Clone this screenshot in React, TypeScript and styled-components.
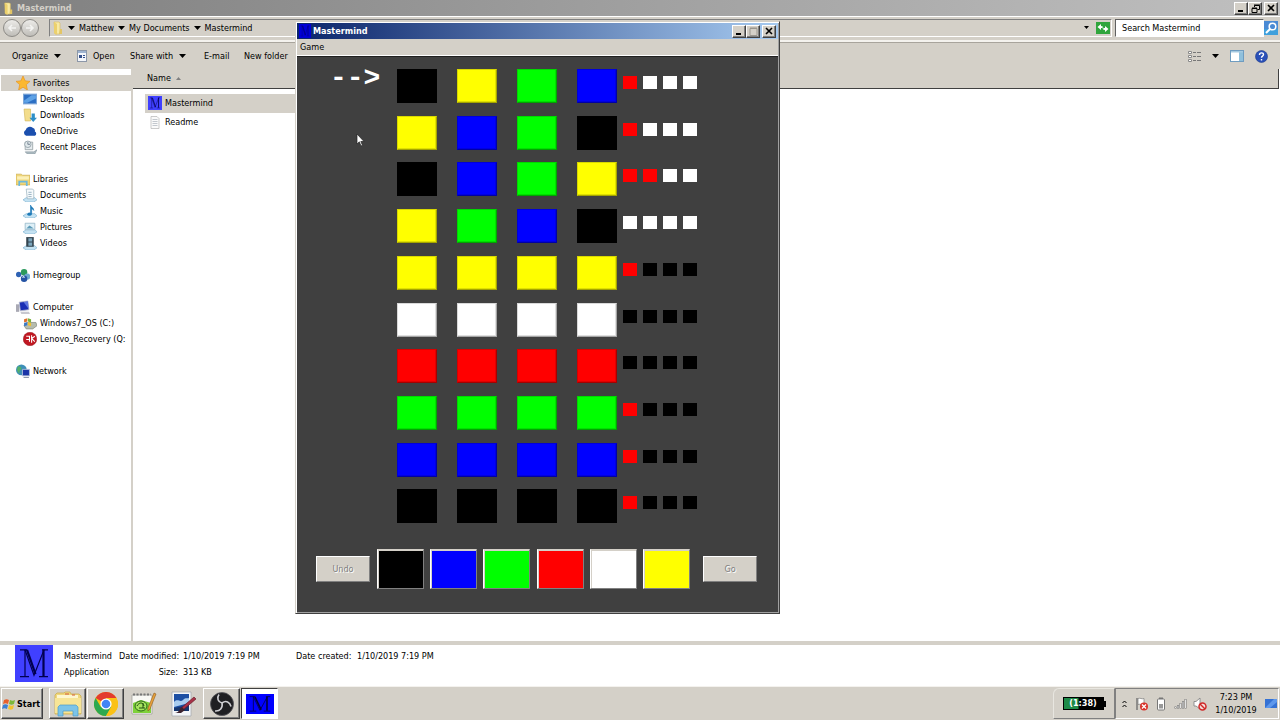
import React from "react";
import styled, { createGlobalStyle, css } from "styled-components";

const UI = `"DejaVu Sans Condensed", "DejaVu Sans", sans-serif`;
const FACE = "#d4d0c8";

const Global = createGlobalStyle`
  *, *::before, *::after { box-sizing: border-box; }
  html, body { margin: 0; padding: 0; background: #fff; }
  body, button, input { font-family: ${UI}; font-size: 9px; line-height: 16px; color: #000; }
  button { padding: 0; margin: 0; border: 0; background: none; }
  svg { display: block; flex: none; }
  ul { list-style: none; margin: 0; padding: 0; }
`;

const raised = css`
  border: 1px solid;
  border-color: #fff #404040 #404040 #fff;
  box-shadow: inset -1px -1px 0 #808080;
`;

const Desktop = styled.div`
  position: relative;
  display: flex;
  flex-direction: column;
  min-height: 100vh;
  overflow: hidden;
`;
const Explorer = styled.section`
  flex: 1;
  display: flex;
  flex-direction: column;
`;

const TitleBar = styled.header<{ $active?: boolean }>`
  display: flex;
  align-items: center;
  gap: 2px;
  height: 16px;
  padding: 0 2px;
  color: ${(p) => (p.$active ? "#fff" : FACE)};
  background: ${(p) =>
    p.$active
      ? "linear-gradient(90deg, #0a246a, #a6caf0)"
      : "linear-gradient(90deg, #808080, #c0c0c0)"};
`;
const TitleText = styled.h1`
  flex: 1;
  margin: 0;
  font-size: 9px;
  line-height: 14px;
  font-weight: bold;
`;
const CaptionButtons = styled.div`
  display: flex;
`;
const CaptionButton = styled.button`
  ${raised}
  display: grid;
  place-items: center;
  width: 14px;
  height: 13px;
  background: ${FACE};
  &:last-child { margin-left: 2px; }
`;

const AddressRow = styled.div`
  display: flex;
  align-items: center;
  gap: 3px;
  height: 26px;
  padding: 0 1px 2px 3px;
  background: ${FACE};
  border-top: 1px solid #fff;
  border-bottom: 2px solid #f4f2ee;
`;
const NavButtons = styled.div`
  display: flex;
  width: 43px;
`;
const RoundButton = styled.button`
  display: grid;
  place-items: center;
  width: 18px;
  height: 18px;
  border: 1px solid #8c8a86;
  border-radius: 50%;
  background: linear-gradient(#ecebe8, #bfbdb8);
`;
const AddressBox = styled.nav`
  flex: 1;
  display: flex;
  align-items: center;
  gap: 3px;
  height: 18px;
  padding: 0 1px;
  border: 1px solid;
  border-color: #808080 #fff #fff #808080;
`;
const Crumb = styled.a`
  color: #000;
  text-decoration: none;
  padding: 0 1px;
`;
const Spacer = styled.span`
  flex: 1;
`;
const IconButton = styled.button`
  display: grid;
  place-items: center;
`;
const HistoryButton = styled(IconButton)`
  margin-right: 4px;
`;
const SearchBox = styled.form`
  display: flex;
  width: 164px;
`;
const SearchInput = styled.input`
  flex: 1;
  min-width: 0;
  height: 18px;
  padding: 0 6px;
  border: 1px solid;
  border-color: #606060 #fff #fff #606060;
  border-radius: 0;
  background: #fff;
  &::placeholder { color: #000; opacity: 1; }
`;

const Toolbar = styled.div`
  display: flex;
  align-items: center;
  height: 27px;
  padding: 0 12px;
  background: ${FACE};
  border-top: 1px solid #a8a49c;
`;
const ToolButton = styled.button<{ $w?: number }>`
  display: flex;
  align-items: center;
  gap: 6px;
  width: ${(p) => (p.$w ? p.$w + "px" : "auto")};
  white-space: nowrap;
`;
const ToolGroup = styled.div`
  display: flex;
  align-items: center;
  gap: 11px;
`;

const Body = styled.div`
  flex: 1;
  display: flex;
`;
const Sidebar = styled.nav`
  width: 133px;
  flex: none;
  padding: 6px 0 0 1px;
  border-right: 2px solid ${FACE};
  overflow: hidden;
`;
const NavGroup = styled.ul`
  margin-bottom: 16px;
`;
const NavItem = styled.li<{ $child?: boolean; $selected?: boolean }>`
  height: 16px;
  padding-left: ${(p) => (p.$child ? 22 : 15)}px;
  background: ${(p) => (p.$selected ? FACE : "transparent")};
`;
const NavLink = styled.a`
  display: flex;
  align-items: center;
  gap: 3px;
  color: #000;
  text-decoration: none;
  white-space: nowrap;
`;

const FilePane = styled.main`
  flex: 1;
  padding-right: 1px;
`;
const FileTable = styled.table`
  width: 100%;
  border-collapse: collapse;
`;
const HeadCell = styled.th`
  height: 19px;
  padding: 0 0 0 14px;
  text-align: left;
  font-weight: normal;
  background: ${FACE};
  border-bottom: 1px solid #404040;
  border-right: 1px solid #404040;
`;
const HeadLabel = styled.span`
  display: flex;
  align-items: center;
  gap: 5px;
`;
const FileCell = styled.td`
  padding: 0 0 0 12px;
`;
const FirstRow = styled.tr`
  & > td { padding-top: 5px; }
`;
const FileName = styled.span<{ $selected?: boolean }>`
  display: flex;
  align-items: center;
  gap: 3px;
  width: 300px;
  height: 19px;
  padding-left: 3px;
  background: ${(p) => (p.$selected ? FACE : "transparent")};
`;

const Details = styled.footer`
  display: flex;
  gap: 11px;
  height: 45px;
  padding-left: 15px;
  border-top: 4px solid ${FACE};
  background: #fff;
`;
const DetailGrid = styled.dl`
  display: grid;
  grid-template-columns: 55px 59px 118px 56px auto;
  grid-auto-rows: 16px;
  margin: 3px 0 0;
  white-space: nowrap;
  dt, dd { margin: 0; }
`;
const Right = styled.dt`
  text-align: right;
`;
const Value = styled.dd`
  padding-left: 5px;
`;

const Taskbar = styled.footer`
  display: flex;
  align-items: center;
  height: 34px;
  padding: 1px;
  background: ${FACE};
  border-top: 1px solid #f4f2ee;
`;
const StartButton = styled.button`
  ${raised}
  display: flex;
  align-items: center;
  gap: 1px;
  width: 42px;
  height: 31px;
  margin-right: 6px;
  font-weight: bold;
`;
const TaskButton = styled.button<{ $kind?: "raised" | "flat" | "pressed" }>`
  display: grid;
  place-items: center;
  width: 37px;
  height: 31px;
  margin-right: ${(p) => (p.$kind === "flat" ? 2 : 1)}px;
  ${(p) => p.$kind === "raised" && raised}
  ${(p) =>
    p.$kind === "pressed" &&
    css`
      background: #fff;
      border: 1px solid;
      border-color: #404040 #fff #fff #404040;
    `}
`;
const BatteryPanel = styled.div`
  display: grid;
  place-items: center;
  width: 62px;
  height: 31px;
  border: 1px solid;
  border-color: #e8e6e0 #808080 #808080 #e8e6e0;
  border-radius: 6px 0 0 0;
`;
const BatteryGauge = styled.div`
  display: flex;
  align-items: center;
  &::after {
    content: "";
    width: 2px;
    height: 6px;
    background: #000;
  }
`;
const Battery = styled.div`
  width: 41px;
  height: 13px;
  border: 1px solid #000;
  background: linear-gradient(90deg, #1d8a48 14px, #000 15px);
  color: #fff;
  font-weight: bold;
  line-height: 11px;
  text-align: center;
`;
const Tray = styled.div`
  display: flex;
  align-items: center;
  gap: 6px;
  height: 31px;
  padding: 0 1px 0 6px;
  border: 1px solid;
  border-color: #808080 #fff #fff #808080;
`;
const Clock = styled.time`
  width: 46px;
  line-height: 13px;
  text-align: center;
  white-space: pre-line;
`;

const GameWindow = styled.section`
  position: absolute;
  left: 295px;
  top: 21px;
  width: 485px;
  border: 1px solid;
  border-color: ${FACE} #404040 #404040 ${FACE};
  background: ${FACE};
  padding: 1px;
  box-shadow: inset 1px 1px 0 #fff, inset -1px -1px 0 #a0a0a0;
`;
const MenuBar = styled.div`
  display: flex;
  height: 17px;
  padding-left: 3px;
  align-items: center;
  border-bottom: 1px solid #fff;
`;
const Board = styled.div`
  border-top: 1px solid #202020;
  background: #404040;
  padding: 12px 21px 23px 19px;
`;
const PlayArea = styled.div`
  display: flex;
  margin-bottom: 13px;
`;
const Arrow = styled.div`
  width: 81px;
  padding-left: 14px;
  color: #fff;
  font: bold 28px/20px "Liberation Mono", monospace;
`;
const Rows = styled.div`
  display: grid;
  grid-template-rows: repeat(10, 1fr);
  height: 467px;
`;
const GuessRow = styled.div`
  display: flex;
  gap: 20px;
`;
const Slot = styled.span<{ $c: string }>`
  width: 40px;
  height: 34px;
  background: ${(p) => p.$c};
  border: 1px solid;
  border-color: rgba(0, 0, 0, 0.15) rgba(0, 0, 0, 0.35) rgba(0, 0, 0, 0.35) rgba(0, 0, 0, 0.15);
  box-shadow: inset -1px -1px 0 rgba(0, 0, 0, 0.12);
`;
const Pegs = styled.span`
  display: flex;
  gap: 6px;
  margin: 7px 0 0 -14px;
`;
const Peg = styled.span<{ $c: string }>`
  width: 14px;
  height: 13px;
  background: ${(p) => p.$c};
`;
const Controls = styled.div`
  display: flex;
  align-items: center;
  justify-content: space-between;
`;
const GameButton = styled.button`
  width: 54px;
  height: 26px;
  background: ${FACE};
  border: 1px solid;
  border-color: #fff #808080 #808080 #fff;
  color: #808080;
  text-shadow: 1px 1px 0 #fff;
`;
const Palette = styled.div`
  display: flex;
  justify-content: space-between;
  width: 313px;
  margin-right: 6px;
`;
const Swatch = styled.button<{ $c: string }>`
  width: 47px;
  height: 40px;
  background: ${(p) => p.$c};
  border: 1px solid;
  border-color: #d4d0c8 #808080 #808080 #fff;
  box-shadow: inset 1px 1px 0 #d4d0c8;
`;
const Pointer = styled.svg`
  position: absolute;
  left: 356px;
  top: 133px;
`;

const COLORS: Record<string, string> = {
  k: "#000000",
  b: "#0000ff",
  g: "#00ff00",
  r: "#ff0000",
  w: "#ffffff",
  y: "#ffff00",
};
const NAMES: Record<string, string> = { k: "Black", b: "Blue", g: "Green", r: "Red", w: "White", y: "Yellow" };
const GUESSES = [
  ["kygb", "rwww"],
  ["ybgk", "rwww"],
  ["kbgy", "rrww"],
  ["ygbk", "wwww"],
  ["yyyy", "rkkk"],
  ["wwww", "kkkk"],
  ["rrrr", "kkkk"],
  ["gggg", "rkkk"],
  ["bbbb", "rkkk"],
  ["kkkk", "rkkk"],
];

const Down = () => (
  <svg width="7" height="4" viewBox="0 0 7 4"><path d="M0 0h7L3.5 4z" /></svg>
);
const SmallDown = () => (
  <svg width="5" height="3" viewBox="0 0 5 3"><path d="M0 0h5L2.500 3z" /></svg>
);
const Folder = ({ s = 14 }: { s?: number }) => (
  <svg width={s} height={s} viewBox="0 0 14 14">
    <path d="M3 1h5l1 1v11H4z" fill="#f7e9a4" stroke="#d6b95a" strokeWidth=".6" />
    <path d="M3 1l3 2v11l-3-2z" fill="#ecd06c" />
    <path d="M9 8h2v5H8z" fill="#e3c565" />
  </svg>
);
const MIcon = ({ w, h, bg, fg = "#000050" }: { w: number; h: number; bg: string; fg?: string }) => (
  <svg width={w} height={h} viewBox="0 0 38 38" preserveAspectRatio="none">
    <rect width="38" height="38" fill={bg} />
    <g stroke={fg} fill="none">
      <path d="M10 5v27" strokeWidth="1.200" />
      <path d="M10 5l9 26L29 5" strokeWidth="1.200" />
      <path d="M12 5l8.500 25M28.500 5v27" strokeWidth="2.200" />
      <path d="M5 5h7M27 5h6M5 32.500h9M24 32.500h9" strokeWidth="1.200" />
    </g>
  </svg>
);

const Base = () => <path d="M0 11l3-2h8l2 2-3 2H3z" fill="#c4e2f2" stroke="#7db2d0" strokeWidth=".6" />;
const ICONS: Record<string, React.ReactNode> = {
  star: <path d="M6.500 0l2 4.500 4.500.5-3.400 3 1 5-4.100-2.600L2.400 13l1-5L0 5l4.500-.5z" fill="#fbb830" stroke="#e8921c" strokeWidth=".6" />,
  desktop: <><rect x=".5" y="2" width="12" height="9" fill="#2c6fc4" stroke="#7fa8d8" /><path d="M1 8l7-5h4v3L4 10H1z" fill="#5ea2e6" /></>,
  downloads: <><path d="M1 1h6v11H2z" fill="#f3dd8c" stroke="#d2b658" strokeWidth=".6" /><path d="M8 5h3v4h2l-3.500 4L6 9h2z" fill="#2d8fc8" /></>,
  onedrive: <path d="M3 11a3 3 0 0 1-.5-5.500A4 4 0 0 1 9 3.500 3 3 0 0 1 11 7a2.200 2.200 0 0 1 0 4z" fill="#1b4fae" />,
  recent: <><path d="M2 2h7v7H2z" fill="#e6ebee" stroke="#8e999f" strokeWidth=".7" /><circle cx="4.500" cy="4" r="3" fill="#dfe7ea" stroke="#85949c" strokeWidth=".7" /><path d="M4.500 2v2h2" stroke="#567" strokeWidth=".7" fill="none" /><path d="M2 11h8l3-2-2 4H4z" fill="#b0bec5" stroke="#7d8e96" strokeWidth=".5" /></>,
  libraries: <><path d="M0 2h5l1 1h7v9H0z" fill="#f0d678" stroke="#c9aa4a" strokeWidth=".6" /><path d="M1 4h11v3H1z" fill="#fbf0b8" /><path d="M3 13V9h7v4" fill="none" stroke="#6bb8dc" strokeWidth="1.600" /></>,
  documents: <><Base /><path d="M3 1h6l1 1v8H4z" fill="#f6fafc" stroke="#8fa9b8" strokeWidth=".6" /><path d="M5 4h3M5 6h3M5 8h3" stroke="#7d9db2" strokeWidth=".7" /></>,
  music: <><Base /><path d="M7 9V1c0 2 3 2 3 5-1-1.500-2-1.500-2-1.500V9.500" fill="#1d7ab8" stroke="#1d7ab8" strokeWidth=".6" /><ellipse cx="6" cy="9.500" rx="2" ry="1.500" fill="#1d7ab8" /></>,
  pictures: <><Base /><path d="M2 3h9v6H2z" fill="#dff0f7" stroke="#8fb3c6" strokeWidth=".7" /><path d="M3 8l3-3 4 3z" fill="#5c9ab8" /></>,
  videos: <><Base /><path d="M3 1h7v9H3z" fill="#344550" /><path d="M5 2h3.500v3H5zM5 6h3.500v3H5z" fill="#7ba6bd" /></>,
  homegroup: <><circle cx="2.500" cy="6" r="2.500" fill="#2e62b4" /><circle cx="7.500" cy="4" r="3" fill="#2b9a5c" /><circle cx="10.500" cy="8" r="2.800" fill="#6da8cf" /><circle cx="7.500" cy="10" r="3" fill="#2453a4" /><path d="M6 9l1-1 1 1" stroke="#cfe6f4" fill="none" /></>,
  computer: <><path d="M0 4h3v7H0z" fill="#a9a9b4" /><path d="M3 2l8-1 1 8-8 1z" fill="#1a2fb4" stroke="#b5b9cc" strokeWidth=".8" /><path d="M7 1.800l4-.5.8 7z" fill="#5f78e0" /><path d="M4 11h8l1 2H5z" fill="#c8c8d0" /></>,
  drive: <><path d="M1 9l3-3h8l1 3-4 3H3z" fill="#b6bcae" stroke="#7c8376" strokeWidth=".6" /><path d="M1 3l3-1v3L1 6z" fill="#e0702c" /><path d="M4.500 2l3 1v3l-3-1z" fill="#79b13c" /><path d="M1 6.500l3-1v3l-3 1z" fill="#3a78c4" /><path d="M4.500 5.500l3 1v3l-3-1z" fill="#f0c030" /></>,
  lenovo: <><circle cx="6.500" cy="6.500" r="6.300" fill="#c01822" stroke="#8d0d16" strokeWidth=".4" /><path d="M3 4h3v5M3 7h3M8 3v7M8 6l3-2M8 6l3 3" stroke="#fff" fill="none" /></>,
  network: <><circle cx="5" cy="5.500" r="5" fill="#3d8fb8" /><path d="M2 2c3 0 4 2 2 4s0 3-1 3A5 5 0 0 1 2 2z" fill="#54b06a" /><path d="M6 5h6.500v6H6z" fill="#1b35a8" stroke="#b7c2da" strokeWidth=".8" /><path d="M7 12h5v1H7z" fill="#8d98ac" /></>,
};

type Node = [icon: string, label: string, child?: boolean];
const TREE: Node[][] = [
  [["star", "Favorites"], ["desktop", "Desktop", true], ["downloads", "Downloads", true], ["onedrive", "OneDrive", true], ["recent", "Recent Places", true]],
  [["libraries", "Libraries"], ["documents", "Documents", true], ["music", "Music", true], ["pictures", "Pictures", true], ["videos", "Videos", true]],
  [["homegroup", "Homegroup"]],
  [["computer", "Computer"], ["drive", "Windows7_OS (C:)", true], ["lenovo", "Lenovo_Recovery (Q:", true]],
  [["network", "Network"]],
];

const Minimize = () => <svg width="8" height="8" viewBox="0 0 8 8"><path d="M1 6h5v2H1z" /></svg>;
const Close = () => <svg width="8" height="8" viewBox="0 0 8 8"><path d="M1 1l6 6M7 1L1 7" stroke="#000" strokeWidth="1.600" /></svg>;
const Maximize = () => <svg width="9" height="9" viewBox="0 0 9 9"><path d="M1 1.500h7v7H1z" fill="none" stroke="#9a968e" /><path d="M1 1h7" stroke="#9a968e" /></svg>;
const Restore = () => <svg width="9" height="9" viewBox="0 0 9 9"><path d="M3.500 3V1.500h5v4H6.500M1 4.500h5v4H1z" fill="none" stroke="#000" /><path d="M3 1h6M1 4h5" stroke="#000" /></svg>;

function ExplorerWindow() {
  return (
    <Explorer>
      <TitleBar>
        <Folder s={13} />
        <TitleText>Mastermind</TitleText>
        <CaptionButtons>
          <CaptionButton aria-label="Minimize"><Minimize /></CaptionButton>
          <CaptionButton aria-label="Restore"><Restore /></CaptionButton>
          <CaptionButton aria-label="Close"><Close /></CaptionButton>
        </CaptionButtons>
      </TitleBar>
      <AddressRow>
        <NavButtons>
          <RoundButton aria-label="Back"><svg width="10" height="10" viewBox="0 0 10 10"><path d="M9 5H2M5 2L2 5l3 3" fill="none" stroke="#f4f4f2" strokeWidth="1.600" /></svg></RoundButton>
          <RoundButton aria-label="Forward"><svg width="10" height="10" viewBox="0 0 10 10"><path d="M1 5h7M5 2l3 3-3 3" fill="none" stroke="#f4f4f2" strokeWidth="1.600" /></svg></RoundButton>
        </NavButtons>
        <AddressBox aria-label="Address">
          <Folder />
          <Down />
          <Crumb href="#matthew">Matthew</Crumb>
          <Down />
          <Crumb href="#documents">My Documents</Crumb>
          <Down />
          <Crumb href="#mastermind">Mastermind</Crumb>
          <Spacer />
          <HistoryButton aria-label="Previous locations"><SmallDown /></HistoryButton>
          <IconButton aria-label="Refresh">
            <svg width="14" height="12" viewBox="0 0 14 12"><rect width="14" height="12" fill="#2fa53c" /><path d="M1.500 5l3.500-3v2c2 0 2.500 1 2.500 3C7 6 6 6 5 6v2zM12.500 7L9 4v2C7.500 6 7 5.500 6.500 4.500 6.500 7 7 8 9 8v2z" fill="#fff" /></svg>
          </IconButton>
        </AddressBox>
        <SearchBox onSubmit={(e) => e.preventDefault()}>
          <SearchInput type="text" aria-label="Search Mastermind" placeholder="Search Mastermind" />
          <IconButton type="submit" aria-label="Search">
            <svg width="15" height="16" viewBox="0 0 15 16"><rect y="1" width="14" height="14" fill="#4a8ad4" /><path d="M0 9h14v6H0z" fill="#3fa0dc" /><circle cx="8.500" cy="6.500" r="3.300" fill="none" stroke="#fff" strokeWidth="1.500" /><path d="M6 9l-4 4" stroke="#fff" strokeWidth="2" /></svg>
          </IconButton>
        </SearchBox>
      </AddressRow>
      <Toolbar>
        <ToolButton $w={65}>Organize <Down /></ToolButton>
        <ToolButton $w={53}>
          <svg width="10" height="12" viewBox="0 0 10 12"><rect x=".5" y=".5" width="9" height="11" fill="#f4f6fa" stroke="#8c97a8" /><path d="M1 1h8v2H1z" fill="#9fb4d0" /><path d="M2 5h3v3H2zM6 5h2v1H6zM6 7h2v1H6z" fill="#34508c" /></svg>
          Open
        </ToolButton>
        <ToolButton $w={74}>Share with <Down /></ToolButton>
        <ToolButton $w={40}>E-mail</ToolButton>
        <ToolButton>New folder</ToolButton>
        <Spacer />
        <ToolGroup>
          <IconButton aria-label="Views">
            <svg width="13" height="11" viewBox="0 0 13 11"><path d="M.5 .5h3v2h-3zM.5 4.500h3v2h-3zM.5 8.500h3v2h-3z" fill="#fff" stroke="#8a8a8a" /><path d="M5 1.500h3M9 1.500h4M5 5.500h3M9 5.500h4M5 9.500h3M9 9.500h4" stroke="#777" /></svg>
          </IconButton>
          <IconButton aria-label="More views"><Down /></IconButton>
          <IconButton aria-label="Preview pane">
            <svg width="14" height="12" viewBox="0 0 14 12"><rect x=".5" y=".5" width="13" height="11" fill="#fff" stroke="#6f9cc0" /><path d="M9 1h4v10H9z" fill="#8fc0dc" /><path d="M1 1h12v1.500H1z" fill="#a4c9e0" /></svg>
          </IconButton>
          <IconButton aria-label="Help">
            <svg width="13" height="13" viewBox="0 0 13 13"><circle cx="6.500" cy="6.500" r="6" fill="#2a50b8" stroke="#1c3a8c" strokeWidth=".6" /><path d="M4.500 5c0-3 4-2.600 4-.4 0 1.600-2 1.500-2 3.200M6.500 9v1.500" fill="none" stroke="#fff" strokeWidth="1.400" /></svg>
          </IconButton>
        </ToolGroup>
      </Toolbar>
      <Body>
        <Sidebar aria-label="Navigation">
          {TREE.map((group) => (
            <NavGroup key={group[0][1]}>
              {group.map(([icon, label, child]) => (
                <NavItem key={label} $child={child} $selected={label === "Favorites"}>
                  <NavLink href="#folder">
                    <svg width="14" height="14" viewBox="0 0 13 13">{ICONS[icon]}</svg>
                    {label}
                  </NavLink>
                </NavItem>
              ))}
            </NavGroup>
          ))}
        </Sidebar>
        <FilePane>
          <FileTable>
            <thead>
              <tr>
                <HeadCell scope="col">
                  <HeadLabel>Name <svg width="5" height="3" viewBox="0 0 5 3"><path d="M0 3h5L2.500 0z" fill="#808080" /></svg></HeadLabel>
                </HeadCell>
              </tr>
            </thead>
            <tbody>
              <FirstRow>
                <FileCell><FileName $selected><MIcon w={14} h={14} bg="#4040ff" />Mastermind</FileName></FileCell>
              </FirstRow>
              <tr>
                <FileCell>
                  <FileName>
                    <svg width="14" height="13" viewBox="0 0 14 13"><path d="M3 .5h6l2 2v10H3z" fill="#fafafa" stroke="#b4b4b4" strokeWidth=".7" /><path d="M4.500 3.500h5M4.500 5.500h5M4.500 7.500h5M4.500 9.500h5" stroke="#aab2ba" strokeWidth=".7" /></svg>
                    Readme
                  </FileName>
                </FileCell>
              </tr>
            </tbody>
          </FileTable>
        </FilePane>
      </Body>
      <Details>
        <MIcon w={38} h={37} bg="#4040ff" />
        <DetailGrid>
          <dt>Mastermind</dt>
          <Right>Date modified:</Right>
          <Value>1/10/2019 7:19 PM</Value>
          <dt>Date created:</dt>
          <Value>1/10/2019 7:19 PM</Value>
          <dt>Application</dt>
          <Right>Size:</Right>
          <Value>313 KB</Value>
        </DetailGrid>
      </Details>
    </Explorer>
  );
}

function Game() {
  return (
    <GameWindow>
      <TitleBar $active>
        <MIcon w={12} h={14} bg="#0000d8" fg="#000078" />
        <TitleText>Mastermind</TitleText>
        <CaptionButtons>
          <CaptionButton aria-label="Minimize"><Minimize /></CaptionButton>
          <CaptionButton aria-label="Maximize" disabled><Maximize /></CaptionButton>
          <CaptionButton aria-label="Close"><Close /></CaptionButton>
        </CaptionButtons>
      </TitleBar>
      <MenuBar><button>Game</button></MenuBar>
      <Board>
        <PlayArea>
          <Arrow>--&gt;</Arrow>
          <Rows>
            {GUESSES.map(([slots, pegs], i) => (
              <GuessRow key={i}>
                {[...slots].map((c, j) => <Slot key={j} $c={COLORS[c]} />)}
                <Pegs>{[...pegs].map((c, j) => <Peg key={j} $c={COLORS[c]} />)}</Pegs>
              </GuessRow>
            ))}
          </Rows>
        </PlayArea>
        <Controls>
          <GameButton disabled>Undo</GameButton>
          <Palette>
            {[..."kbgrwy"].map((c) => <Swatch key={c} $c={COLORS[c]} aria-label={NAMES[c]} />)}
          </Palette>
          <GameButton disabled>Go</GameButton>
        </Controls>
      </Board>
    </GameWindow>
  );
}

function TaskbarStrip() {
  return (
    <Taskbar>
      <StartButton>
        <svg width="14" height="14" viewBox="0 0 14 14"><path d="M2 3c2-1 3-1 5 0L6 7C4 6 3 6 1 7z" fill="#e8602c" /><path d="M8 3c2 1 3 1 5 0l-1 4c-2 1-3 1-5 0z" fill="#7db93a" /><path d="M1 8c2-1 3-1 5 0l-1 4c-2-1-3-1-5 0z" fill="#3a7fd4" /><path d="M7 8c2 1 3 1 5 0l-1 4c-2 1-3 1-5 0z" fill="#f4c430" /></svg>
        Start
      </StartButton>
      <TaskButton $kind="raised" aria-label="Windows Explorer">
        <svg width="28" height="26" viewBox="0 0 28 26"><path d="M1 4l2-2h7l1-1h5l1 2h8l2 2v18H1z" fill="#f0d87c" stroke="#cdae50" strokeWidth=".8" /><path d="M3 4h21v4H3z" fill="#fdf6cf" /><path d="M11 3h4M18 4h3" stroke="#d4583c" /><path d="M1 7h26v15H1z" fill="#f7e596" /><path d="M4 25v-9l2-2h16l2 2v9h-5v-5H9v5z" fill="#7cc4e8" stroke="#4a9cc8" strokeWidth=".7" /></svg>
      </TaskButton>
      <TaskButton $kind="raised" aria-label="Google Chrome">
        <svg width="24" height="24" viewBox="0 0 24 24"><circle cx="12" cy="12" r="12" fill="#fbc116" /><path d="M12 12L1.600 6A12 12 0 0 1 22.400 6H12z" fill="#e33b2e" /><path d="M12 12l5.200 3L12 24A12 12 0 0 1 1.600 6l5.200 9z" fill="#2da94f" /><path d="M12 6h10.400A12 12 0 0 1 12 24l5.200-9z" fill="#fbc116" /><circle cx="12" cy="12" r="5.600" fill="#fff" /><circle cx="12" cy="12" r="4.300" fill="#4285f4" /></svg>
      </TaskButton>
      <TaskButton $kind="flat" aria-label="Notepad++">
        <svg width="26" height="26" viewBox="0 0 26 26"><path d="M1 4h20v19H1z" fill="#f8f8f4" stroke="#9a9a94" strokeWidth=".7" /><path d="M2 3.500h18" stroke="#777" strokeDasharray="2 1.500" strokeWidth="2" /><path d="M2 12l8-3 10 3v10H2z" fill="#7fd13a" /><ellipse cx="10" cy="15" rx="6" ry="5" fill="#a6e45e" stroke="#2b6a18" /><path d="M6 15c2-4 6-4 7 0M8 17h6M12 12v5" stroke="#205010" fill="none" /><path d="M23 2l2 1-6 15-2 2 0-3z" fill="#e8a23c" stroke="#8d5a1c" strokeWidth=".6" /></svg>
      </TaskButton>
      <TaskButton $kind="flat" aria-label="Paint tool">
        <svg width="26" height="26" viewBox="0 0 26 26"><path d="M2 1h19v24H2z" fill="#f3f5f8" stroke="#a0a6ae" strokeWidth=".7" /><path d="M4 3h15v17H4z" fill="#1c4fa4" /><path d="M4 11c4-4 6 1 9-2s4-1 6-2v5L4 16z" fill="#a9cdf0" /><path d="M4 17l15-3v6H4z" fill="#16366e" /><path d="M24 6l2 2-13 11-3-1z" fill="#a83248" stroke="#5c1420" strokeWidth=".6" /><path d="M12 16l3 3-4 3H5c3 0 4-3 7-6z" fill="#3c2430" /></svg>
      </TaskButton>
      <TaskButton $kind="raised" aria-label="OBS Studio">
        <svg width="24" height="24" viewBox="0 0 24 24"><circle cx="12" cy="12" r="11.500" fill="#1f1f22" stroke="#55555a" strokeWidth=".8" /><g fill="none" stroke="#d0d0d4" strokeWidth="1.600"><path d="M12 11C8 10 6.500 6 9 2.500" /><path d="M12 11c4-3 8-1 9 3.500" /><path d="M12 11c1 5-2 8.500-7 8" /></g></svg>
      </TaskButton>
      <TaskButton $kind="pressed" aria-label="Mastermind"><MIcon w={28} h={20} bg="#0000ff" fg="#000040" /></TaskButton>
      <Spacer />
      <BatteryPanel><BatteryGauge><Battery>(1:38)</Battery></BatteryGauge></BatteryPanel>
      <Tray>
        <svg width="5" height="8" viewBox="0 0 5 8"><path d="M.5 3l2-2 2 2M.5 7l2-2 2 2" fill="none" stroke="#000" /></svg>
        <svg width="16" height="14" viewBox="0 0 16 14"><path d="M4 1v12" stroke="#777" strokeWidth="1.500" /><path d="M5 1.500c3-1 3 1 6 0v6c-3 1-3-1-6 0z" fill="#fff" stroke="#888" strokeWidth=".8" /><circle cx="11" cy="9.500" r="4" fill="#d8342c" /><path d="M9 7.500l4 4M13 7.500l-4 4" stroke="#fff" strokeWidth="1.300" /></svg>
        <svg width="12" height="14" viewBox="0 0 12 14"><rect x="2.500" y="2" width="7" height="11" rx="1" fill="#fff" stroke="#777" /><path d="M4 .5h4v1.500H4z" fill="#777" /><path d="M4 7h4v4.500H4z" fill="#999" /></svg>
        <svg width="14" height="12" viewBox="0 0 14 12"><path d="M2.500 8.500v2M5 7v3.500M7.500 5v5.500M10 3v7.500M12.500 1v9.500" stroke="#777" strokeWidth="2" /><path d="M2.500 9v1M5 7.500V10M7.500 5.500V10M10 3.500V10M12.500 1.500V10" stroke="#fff" strokeWidth=".8" /></svg>
        <svg width="14" height="14" viewBox="0 0 14 14"><path d="M1 4.500h2L7 1v11L3 9H1z" fill="#fff" stroke="#888" strokeWidth=".9" /><circle cx="9.500" cy="9.500" r="3.500" fill="#f4dcd8" stroke="#d02828" strokeWidth="1.500" /><path d="M7 7l5 5" stroke="#d02828" strokeWidth="1.400" /></svg>
        <Clock>{"7:23 PM\n1/10/2019"}</Clock>
        <svg width="12" height="10" viewBox="0 0 12 10"><path d="M0 0h12v9H0z" fill="#3572d4" /><path d="M0 9l9-9h3v3L5 9z" fill="#5e98ec" /></svg>
      </Tray>
    </Taskbar>
  );
}

export default function App() {
  return (
    <Desktop>
      <Global />
      <ExplorerWindow />
      <TaskbarStrip />
      <Game />
      <Pointer width="9" height="14" viewBox="0 0 9 14" aria-hidden="true">
        <path d="M1 1v10l2.300-2.200L5 13l1.500-.7-1.700-3.800H8z" fill="#fff" stroke="#222" strokeWidth=".7" />
      </Pointer>
    </Desktop>
  );
}
